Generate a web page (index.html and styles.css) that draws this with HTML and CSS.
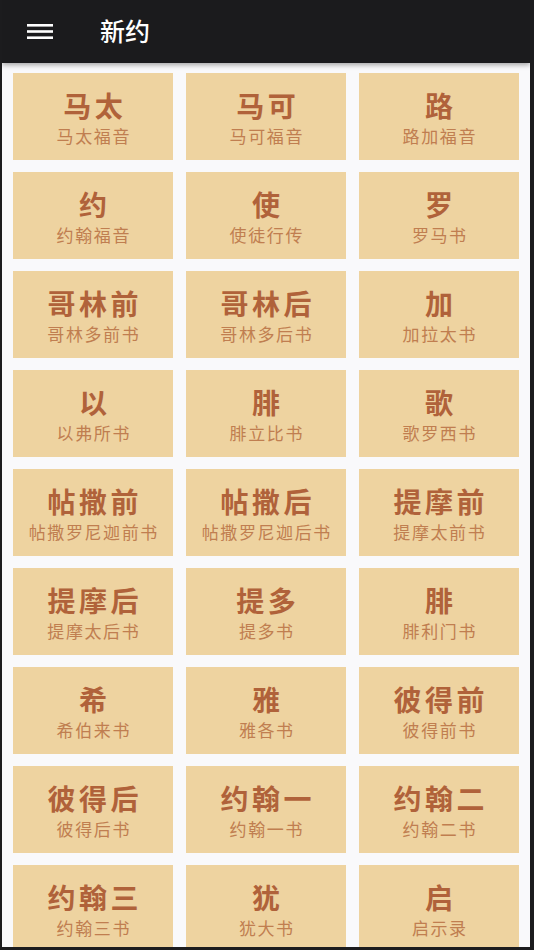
FILE: index.html
```html
<!DOCTYPE html>
<html lang="zh">
<head>
<meta charset="utf-8">
<title>新约</title>
<link rel="stylesheet" href="styles.css">
</head>
<body>
<div class="app">
  <header class="bar">
    <svg class="menu" width="26" height="15" viewBox="0 0 26 15">
      <rect x="0" y="0" width="26" height="2.6" fill="#fff"/>
      <rect x="0" y="6.2" width="26" height="2.6" fill="#fff"/>
      <rect x="0" y="12.4" width="26" height="2.6" fill="#fff"/>
    </svg>
    <h1 class="title">新约</h1>
  </header>
  <main class="grid">
    <div class="tile"><span class="name">马太</span><span class="full">马太福音</span></div>
    <div class="tile"><span class="name">马可</span><span class="full">马可福音</span></div>
    <div class="tile"><span class="name">路</span><span class="full">路加福音</span></div>
    <div class="tile"><span class="name">约</span><span class="full">约翰福音</span></div>
    <div class="tile"><span class="name">使</span><span class="full">使徒行传</span></div>
    <div class="tile"><span class="name">罗</span><span class="full">罗马书</span></div>
    <div class="tile"><span class="name">哥林前</span><span class="full">哥林多前书</span></div>
    <div class="tile"><span class="name">哥林后</span><span class="full">哥林多后书</span></div>
    <div class="tile"><span class="name">加</span><span class="full">加拉太书</span></div>
    <div class="tile"><span class="name">以</span><span class="full">以弗所书</span></div>
    <div class="tile"><span class="name">腓</span><span class="full">腓立比书</span></div>
    <div class="tile"><span class="name">歌</span><span class="full">歌罗西书</span></div>
    <div class="tile"><span class="name">帖撒前</span><span class="full">帖撒罗尼迦前书</span></div>
    <div class="tile"><span class="name">帖撒后</span><span class="full">帖撒罗尼迦后书</span></div>
    <div class="tile"><span class="name">提摩前</span><span class="full">提摩太前书</span></div>
    <div class="tile"><span class="name">提摩后</span><span class="full">提摩太后书</span></div>
    <div class="tile"><span class="name">提多</span><span class="full">提多书</span></div>
    <div class="tile"><span class="name">腓</span><span class="full">腓利门书</span></div>
    <div class="tile"><span class="name">希</span><span class="full">希伯来书</span></div>
    <div class="tile"><span class="name">雅</span><span class="full">雅各书</span></div>
    <div class="tile"><span class="name">彼得前</span><span class="full">彼得前书</span></div>
    <div class="tile"><span class="name">彼得后</span><span class="full">彼得后书</span></div>
    <div class="tile"><span class="name">约翰一</span><span class="full">约翰一书</span></div>
    <div class="tile"><span class="name">约翰二</span><span class="full">约翰二书</span></div>
    <div class="tile"><span class="name">约翰三</span><span class="full">约翰三书</span></div>
    <div class="tile"><span class="name">犹</span><span class="full">犹大书</span></div>
    <div class="tile"><span class="name">启</span><span class="full">启示录</span></div>
  </main>
</div>
</body>
</html>
```

FILE: styles.css
```css
html, body {
  margin: 0;
  padding: 0;
  height: 100%;
  overflow: hidden;
}
body {
  background: #1c1c1e;
  font-family: "Noto Sans CJK SC", "Noto Sans", sans-serif;
}
.app {
  width: 528px;
  height: 947px;
  margin-left: 2px;
  background: #f9f9fb;
  overflow: hidden;
  display: flex;
  flex-direction: column;
}
.bar {
  flex: none;
  height: 63px;
  background: #1b1b1d;
  display: flex;
  align-items: center;
  box-shadow: 0 2px 5px rgba(0, 0, 0, 0.35);
  position: relative;
  z-index: 1;
}
.menu {
  margin-left: 25px;
  display: block;
}
.title {
  margin: 0 0 0 47px;
  color: #ffffff;
  font-size: 25px;
  font-weight: 500;
  line-height: 1;
  padding-bottom: 2px;
}
.grid {
  display: grid;
  grid-template-columns: repeat(3, 160px);
  grid-auto-rows: 87px;
  column-gap: 13px;
  row-gap: 12px;
  padding: 10px 11px 0 11px;
}
.tile {
  background: #eed3a0;
  display: flex;
  flex-direction: column;
  align-items: center;
  padding-top: 16px;
  box-sizing: border-box;
}
.name {
  color: #b0623a;
  font-size: 28px;
  font-weight: 700;
  line-height: 32px;
  letter-spacing: 3.6px;
  padding-left: 3.6px;
  white-space: nowrap;
}
.full {
  color: #c07e50;
  font-size: 17px;
  font-weight: 400;
  line-height: 24px;
  margin-top: 2.5px;
  letter-spacing: 1.6px;
  padding-left: 1.6px;
  white-space: nowrap;
}
```
